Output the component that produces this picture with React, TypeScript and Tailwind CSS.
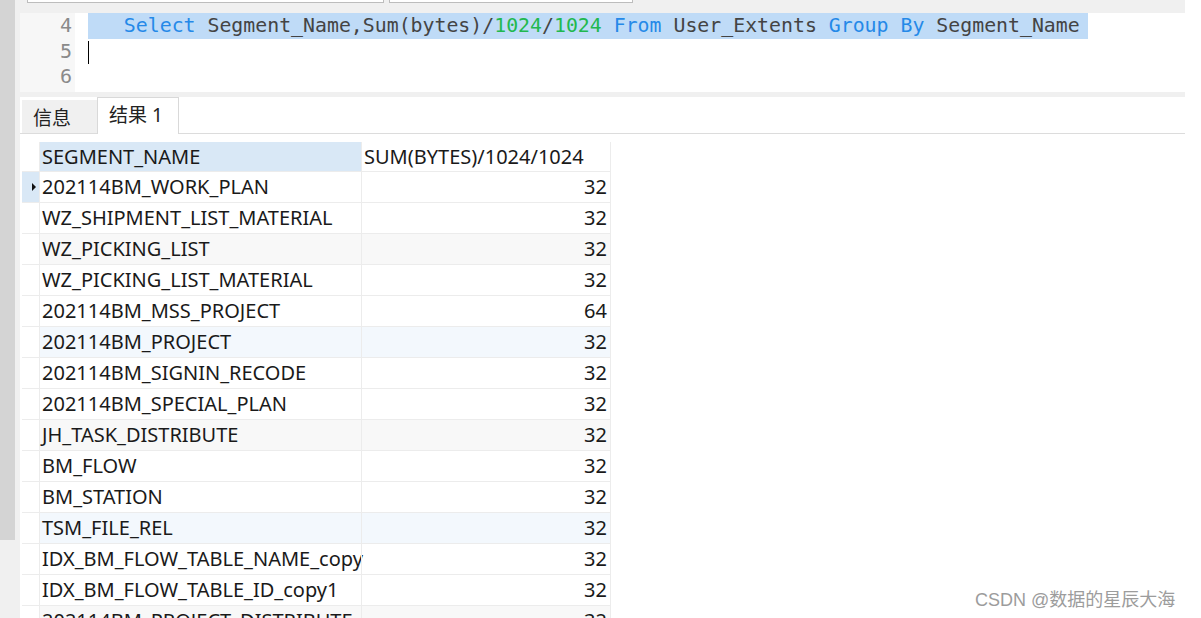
const rows: { name: string; size: number; tint?: 'gray' | 'blue' }[] = [
  { name: '202114BM_WORK_PLAN', size: 32 },
  { name: 'WZ_SHIPMENT_LIST_MATERIAL', size: 32 },
  { name: 'WZ_PICKING_LIST', size: 32, tint: 'gray' },
  { name: 'WZ_PICKING_LIST_MATERIAL', size: 32 },
  { name: '202114BM_MSS_PROJECT', size: 64 },
  { name: '202114BM_PROJECT', size: 32, tint: 'blue' },
  { name: '202114BM_SIGNIN_RECODE', size: 32 },
  { name: '202114BM_SPECIAL_PLAN', size: 32 },
  { name: 'JH_TASK_DISTRIBUTE', size: 32, tint: 'gray' },
  { name: 'BM_FLOW', size: 32 },
  { name: 'BM_STATION', size: 32 },
  { name: 'TSM_FILE_REL', size: 32, tint: 'blue' },
  { name: 'IDX_BM_FLOW_TABLE_NAME_copy', size: 32 },
  { name: 'IDX_BM_FLOW_TABLE_ID_copy1', size: 32 },
  { name: '202114BM_PROJECT_DISTRIBUTE', size: 32, tint: 'gray' },
];

const mono = { fontFamily: '"DejaVu Sans Mono", "Liberation Mono", monospace' };
const sans = { fontFamily: '"Noto Sans", "Noto Sans CJK SC", sans-serif' };

export default function App() {
  return (
    <div className="relative flex h-[618px] w-[1201px] overflow-hidden bg-white">
      {/* left scroll strip */}
      <div className="flex w-[15px] shrink-0 flex-col">
        <div className="h-[540px] shrink-0 bg-[#d4d4d4]" />
        <div className="flex-1 bg-[#f0f0f0]" />
      </div>
      <div className="w-[5px] shrink-0 bg-[#f0f0f0]" />

      <div className="flex w-[1165px] shrink-0 flex-col">
        {/* toolbar remnants */}
        <div className="flex h-[13px] shrink-0 gap-[5px] bg-[#f0f0f0]">
          <div className="ml-[7px] h-[3px] w-[357px] border border-t-0 border-[#bdbdbd] bg-white" />
          <div className="h-[3px] w-[244px] border border-t-0 border-[#bdbdbd] bg-white" />
        </div>

        {/* editor */}
        <div className="flex h-[79px] shrink-0" style={mono}>
          <div className="w-[55px] bg-[#f7f7f7] pr-[3px] text-right text-[20px] leading-[25.5px] text-[#8a8a8a]">
            <div>4</div>
            <div>5</div>
            <div>6</div>
          </div>
          <div className="flex-1 pl-[13px] text-[19.85px] leading-[25.5px] text-[#444]">
            <div className="w-fit whitespace-pre bg-[#bfdbf7] pr-[8px]">
              {'   '}
              <span className="text-[#2589e8]">Select</span> Segment_Name,Sum(bytes)/
              <span className="text-[#22b84f]">1024</span>/
              <span className="text-[#22b84f]">1024</span>{' '}
              <span className="text-[#2589e8]">From</span> User_Extents{' '}
              <span className="text-[#2589e8]">Group</span>{' '}
              <span className="text-[#2589e8]">By</span> Segment_Name
            </div>
            <div className="mt-[2px] h-[23px] w-px bg-black" />
          </div>
        </div>
        <div className="h-[5px] shrink-0 bg-[#f0f0f0]" />

        {/* tabs */}
        <div className="flex h-[37px] shrink-0 items-end border-b border-[#dcdcdc] pl-[2px]" style={sans}>
          <div className="flex h-[33px] w-[75px] items-center bg-[#f0f0f0] pl-[11px] pt-[3px] text-[19px] text-[#222]">
            信息
          </div>
          <div className="-mb-px flex h-[37px] w-[82px] items-center border border-b-0 border-[#d9d9d9] bg-white pl-[11px] pb-[2px] text-[19px] text-[#222]">
            结果 1
          </div>
        </div>

        {/* result grid */}
        <div className="shrink-0 pl-[2px] pt-[8px] text-[20px] text-[#1a1a1a]" style={sans}>
          <div className="flex h-[30px] w-fit border-b border-[#ececec]">
            <div className="w-[18px] border-r border-[#ececec]" />
            <div className="flex w-[321px] items-center bg-[#d9e8f6] pl-[2px]">SEGMENT_NAME</div>
            <div className="flex w-[250px] items-center border-r border-l border-[#ececec] pl-[2px]">
              SUM(BYTES)/1024/1024
            </div>
          </div>
          {rows.map((r, i) => (
            <div
              key={i}
              className={`flex h-[31px] w-fit border-b border-[#ececec] ${
                r.tint === 'blue' ? 'bg-[#f3f8fd]' : r.tint === 'gray' ? 'bg-[#f8f8f8]' : ''
              }`}
            >
              <div
                className={`flex w-[18px] items-center justify-end border-r border-[#ececec] pr-[3px] ${
                  i === 0 ? 'bg-[#d9e8f6]' : 'bg-white'
                }`}
              >
                {i === 0 && (
                  <svg width="4" height="8" viewBox="0 0 4 8">
                    <path d="M0 0 L4 4 L0 8 Z" fill="#111" />
                  </svg>
                )}
              </div>
              <div className="flex w-[321px] items-center whitespace-nowrap pl-[2px]">{r.name}</div>
              <div className="flex w-[250px] items-center justify-end border-r border-l border-[#ececec] pr-[3px]">
                {r.size}
              </div>
            </div>
          ))}
        </div>
      </div>

      <div className="flex-1 bg-white" />

      {/* watermark */}
      <div
        className="absolute left-[975px] top-[587px] text-[18px] text-[#9c9c9c]"
        style={{ fontFamily: '"Liberation Sans", "Noto Sans CJK SC", sans-serif' }}
      >
        CSDN @数据的星辰大海
      </div>
    </div>
  );
}
